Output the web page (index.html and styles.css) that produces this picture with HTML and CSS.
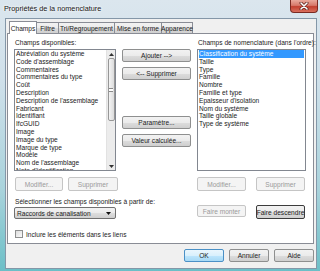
FILE: index.html
```html
<!DOCTYPE html>
<html lang="fr">
<head>
  <meta charset="UTF-8">
  <title>Propriétés de la nomenclature</title>
  <link rel="stylesheet" href="styles.css">
</head>
<body>

  <div class="fenetre">
    <div class="barre-titre">
      <span class="titre">Propriétés de la nomenclature</span>
      <span class="fermer">
        <svg width="10" height="8" viewBox="0 0 10 8">
          <path d="M2 1 L8 7 M8 1 L2 7" stroke="#5a1e18" stroke-width="3" stroke-linecap="round"/>
          <path d="M2 1 L8 7 M8 1 L2 7" stroke="#fff" stroke-width="1.6" stroke-linecap="round"/>
        </svg>
      </span>
    </div>

    <div class="client">
      <div class="onglets">
        <span class="onglet actif o-champs">Champs</span>
        <span class="onglet o-filtre">Filtre</span>
        <span class="onglet o-tri">Tri/Regroupement</span>
        <span class="onglet o-mise">Mise en forme</span>
        <span class="onglet o-apparence">Apparence</span>
      </div>

      <div class="panneau">
        <div class="grille">
          <div class="etiquette col-gauche">Champs disponibles:</div>
          <div class="etiquette col-droite">Champs de nomenclature (dans l'ordre):</div>

          <div class="liste col-gauche">
            <ul class="elements">
              <li>Abréviation du système</li>
              <li>Code d'assemblage</li>
              <li>Commentaires</li>
              <li>Commentaires du type</li>
              <li>Coût</li>
              <li>Description</li>
              <li>Description de l'assemblage</li>
              <li>Fabricant</li>
              <li>Identifiant</li>
              <li>IfcGUID</li>
              <li>Image</li>
              <li>Image du type</li>
              <li>Marque de type</li>
              <li>Modèle</li>
              <li>Nom de l'assemblage</li>
              <li>Note d'identification</li>
            </ul>
            <div class="defilement">
              <span class="fleche">
                <svg width="5" height="3" viewBox="0 0 5 3"><path d="M0 3 L2.5 0 L5 3 Z" fill="#333"/></svg>
              </span>
              <span class="piste">
                <span class="curseur"><span class="prise"></span></span>
              </span>
              <span class="fleche">
                <svg width="5" height="3" viewBox="0 0 5 3"><path d="M0 0 L2.5 3 L5 0 Z" fill="#333"/></svg>
              </span>
            </div>
          </div>

          <div class="colonne-boutons">
            <span class="bouton">Ajouter --&gt;</span>
            <span class="bouton espace-petit">&lt;-- Supprimer</span>
            <span class="bouton espace-grand">Paramètre...</span>
            <span class="bouton espace-petit">Valeur calculée...</span>
          </div>

          <div class="liste col-droite">
            <ul class="elements">
              <li class="choisi">Classification du système</li>
              <li>Taille</li>
              <li>Type</li>
              <li>Famille</li>
              <li>Nombre</li>
              <li>Famille et type</li>
              <li>Epaisseur d'isolation</li>
              <li>Nom du système</li>
              <li>Taille globale</li>
              <li>Type de système</li>
            </ul>
          </div>

          <div class="rangee-boutons col-gauche">
            <span class="bouton inactif b-modifier">Modifier...</span>
            <span class="bouton inactif b-supprimer">Supprimer</span>
          </div>
          <div class="rangee-boutons droite col-droite">
            <span class="bouton inactif b-moyen">Modifier...</span>
            <span class="bouton inactif b-moyen">Supprimer</span>
          </div>

          <div class="etiquette bas col-gauche">Sélectionner les champs disponibles à partir de:</div>
          <div class="selection col-gauche">
            <span>Raccords de canalisation</span>
            <svg width="5" height="3" viewBox="0 0 5 3"><path d="M0 0 L2.5 3 L5 0 Z" fill="#111"/></svg>
          </div>

          <div class="rangee-boutons droite deplacer">
            <span class="bouton inactif b-moyen petit">Faire monter</span>
            <span class="bouton focus b-moyen">Faire descendre</span>
          </div>
        </div>

        <div class="case">
          <span class="boite"></span>
          <span>Inclure les éléments dans les liens</span>
        </div>
      </div>

      <div class="pied">
        <span class="bouton defaut">OK</span>
        <span class="bouton">Annuler</span>
        <span class="bouton">Aide</span>
      </div>
    </div>
  </div>

</body>
</html>
```

FILE: styles.css
```css
* {
  box-sizing: border-box;
}

body {
  margin: 0;
  font-family: "Liberation Sans", Arial, sans-serif;
  font-size: 6.6px;
  color: #1b1b1b;
}

.fenetre {
  width: 320px;
  height: 271px;
  display: flex;
  flex-direction: column;
  padding: 0 3px 2px 5px;
  background: linear-gradient(to bottom, #dbe6ee 0%, #cfe0ea 30%, #a9d3dc 70%, #6cbfc7 100%);
}

.barre-titre {
  height: 18px;
  margin: 0 -3px 0 -5px;
  display: flex;
  justify-content: space-between;
  align-items: flex-start;
}

.titre {
  padding: 4px 0 0 4px;
  font-size: 7.3px;
  color: #151515;
  text-shadow: 0 0 3px #fff, 0 0 3px #fff;
}

.fermer {
  width: 28px;
  height: 13px;
  margin-right: 2px;
  display: flex;
  align-items: center;
  justify-content: center;
  border: 1px solid #7a2a22;
  border-top: none;
  border-radius: 0 0 4px 4px;
  background: linear-gradient(to bottom, #e9a99c 0%, #d7796a 45%, #c2402f 55%, #d9705e 100%);
}

.client {
  flex: 1;
  display: flex;
  flex-direction: column;
  padding: 2px 2px 0 1px;
  background-color: #f0f0f0;
  border: 1px solid #8497a8;
}

/* Onglets */
.onglets {
  height: 12px;
  display: flex;
  align-items: flex-end;
  padding-left: 2px;
}

.onglet {
  height: 11px;
  display: flex;
  align-items: center;
  justify-content: center;
  white-space: nowrap;
  border: 1px solid #898c95;
  border-bottom: none;
  border-left: none;
  background: linear-gradient(to bottom, #f2f2f2 0%, #ebebeb 50%, #dddddd 51%, #cfcfcf 100%);
}

.onglet.actif {
  height: 13px;
  margin-bottom: -1px;
  border-left: 1px solid #898c95;
  background: #fff;
  position: relative;
  z-index: 1;
}

.o-champs { width: 28px; }
.o-filtre { width: 22px; }
.o-tri { width: 56px; }
.o-mise { width: 47px; }
.o-apparence { width: 31px; }

.panneau {
  height: 211px;
  padding: 5px 7px 0 6px;
  background-color: #fff;
  border: 1px solid #898c95;
}

.grille {
  display: grid;
  grid-template-columns: 102px 69px 109px;
  grid-template-rows: 10px 122px 20px 16px 12px;
  column-gap: 6px;
}

.col-gauche { grid-column: 1; }
.col-droite { grid-column: 3; }

.etiquette {
  line-height: 8px;
  padding-left: 1px;
  white-space: nowrap;
}

.etiquette.bas {
  align-self: end;
  margin-bottom: 1px;
}

/* Listes */
.liste {
  display: flex;
  overflow: hidden;
  background-color: #fff;
  border: 1px solid #828790;
}

.elements {
  flex: 1;
  list-style: none;
  margin: 0;
  padding: 0;
}

.elements li {
  height: 7.8px;
  line-height: 7.8px;
  padding-left: 1px;
  white-space: nowrap;
}

.elements li.choisi {
  margin: 0 1px;
  padding-left: 0;
  background-color: #3399ff;
  color: #fff;
}

.defilement {
  width: 9px;
  display: flex;
  flex-direction: column;
  background-color: #ececec;
  border-left: 1px solid #e2e2e2;
}

.fleche {
  height: 8px;
  display: flex;
  align-items: center;
  justify-content: center;
}

.piste {
  flex: 1;
  padding-bottom: 41px;
  display: flex;
}

.curseur {
  flex: 1;
  margin: 0 0.5px;
  display: flex;
  align-items: center;
  justify-content: center;
  border: 1px solid #979797;
  border-radius: 2px;
  background: linear-gradient(to right, #f4f4f4, #dcdcdc);
}

.prise {
  width: 4px;
  height: 4px;
  border-top: 1px solid #8a8a8a;
  border-bottom: 1px solid #8a8a8a;
  background: linear-gradient(#fff 0 33%, #8a8a8a 33% 66%, #fff 66%);
}

/* Boutons */
.bouton {
  height: 13px;
  display: flex;
  align-items: center;
  justify-content: center;
  flex-shrink: 0;
  border: 1px solid #8e8f8f;
  border-radius: 2px;
  background: linear-gradient(to bottom, #f2f2f2 0%, #ebebeb 50%, #dddddd 51%, #cfcfcf 100%);
  white-space: nowrap;
}

.bouton.inactif {
  height: 14px;
  color: #9a9a9a;
  border-color: #c5c5c5;
  background: #f4f4f4;
}

.bouton.petit {
  height: 12px;
  margin-bottom: 1px;
}

.bouton.focus {
  height: 14px;
  border-color: #3c3c3c;
}

.bouton.defaut {
  border-color: #4a90c6;
  background: linear-gradient(to bottom, #eaf6fd 0%, #d9f0fc 50%, #bee6fd 51%, #a7d9f5 100%);
}

.colonne-boutons {
  grid-column: 2;
  grid-row: 2 / 4;
  display: flex;
  flex-direction: column;
}

.espace-petit { margin-top: 5px; }
.espace-grand { margin-top: 36px; }

.rangee-boutons {
  align-self: end;
  display: flex;
  gap: 5px;
  padding-left: 1px;
}

.rangee-boutons.droite {
  justify-content: space-between;
  padding-left: 0;
  padding-right: 1px;
}

.deplacer {
  grid-column: 3;
  grid-row: 4 / 6;
}

.b-modifier { width: 48px; }
.b-supprimer { width: 50px; }
.b-moyen { width: 49px; }

.selection {
  display: flex;
  align-items: center;
  justify-content: space-between;
  padding: 0 4px 0 2px;
  border: 1px solid #707070;
  border-radius: 2px;
  background: linear-gradient(to bottom, #f2f2f2 0%, #ebebeb 50%, #dddddd 51%, #cfcfcf 100%);
}

/* Case à cocher */
.case {
  margin-top: 11px;
  display: flex;
  align-items: center;
  gap: 3px;
  padding-left: 1px;
}

.boite {
  width: 8px;
  height: 8px;
  border: 1px solid #8e8f8f;
  background: linear-gradient(135deg, #dcdcdc, #fbfbfb);
}

/* Pied */
.pied {
  display: flex;
  justify-content: flex-end;
  gap: 5px;
  padding-top: 5px;
}

.pied .bouton {
  width: 40px;
}
```
